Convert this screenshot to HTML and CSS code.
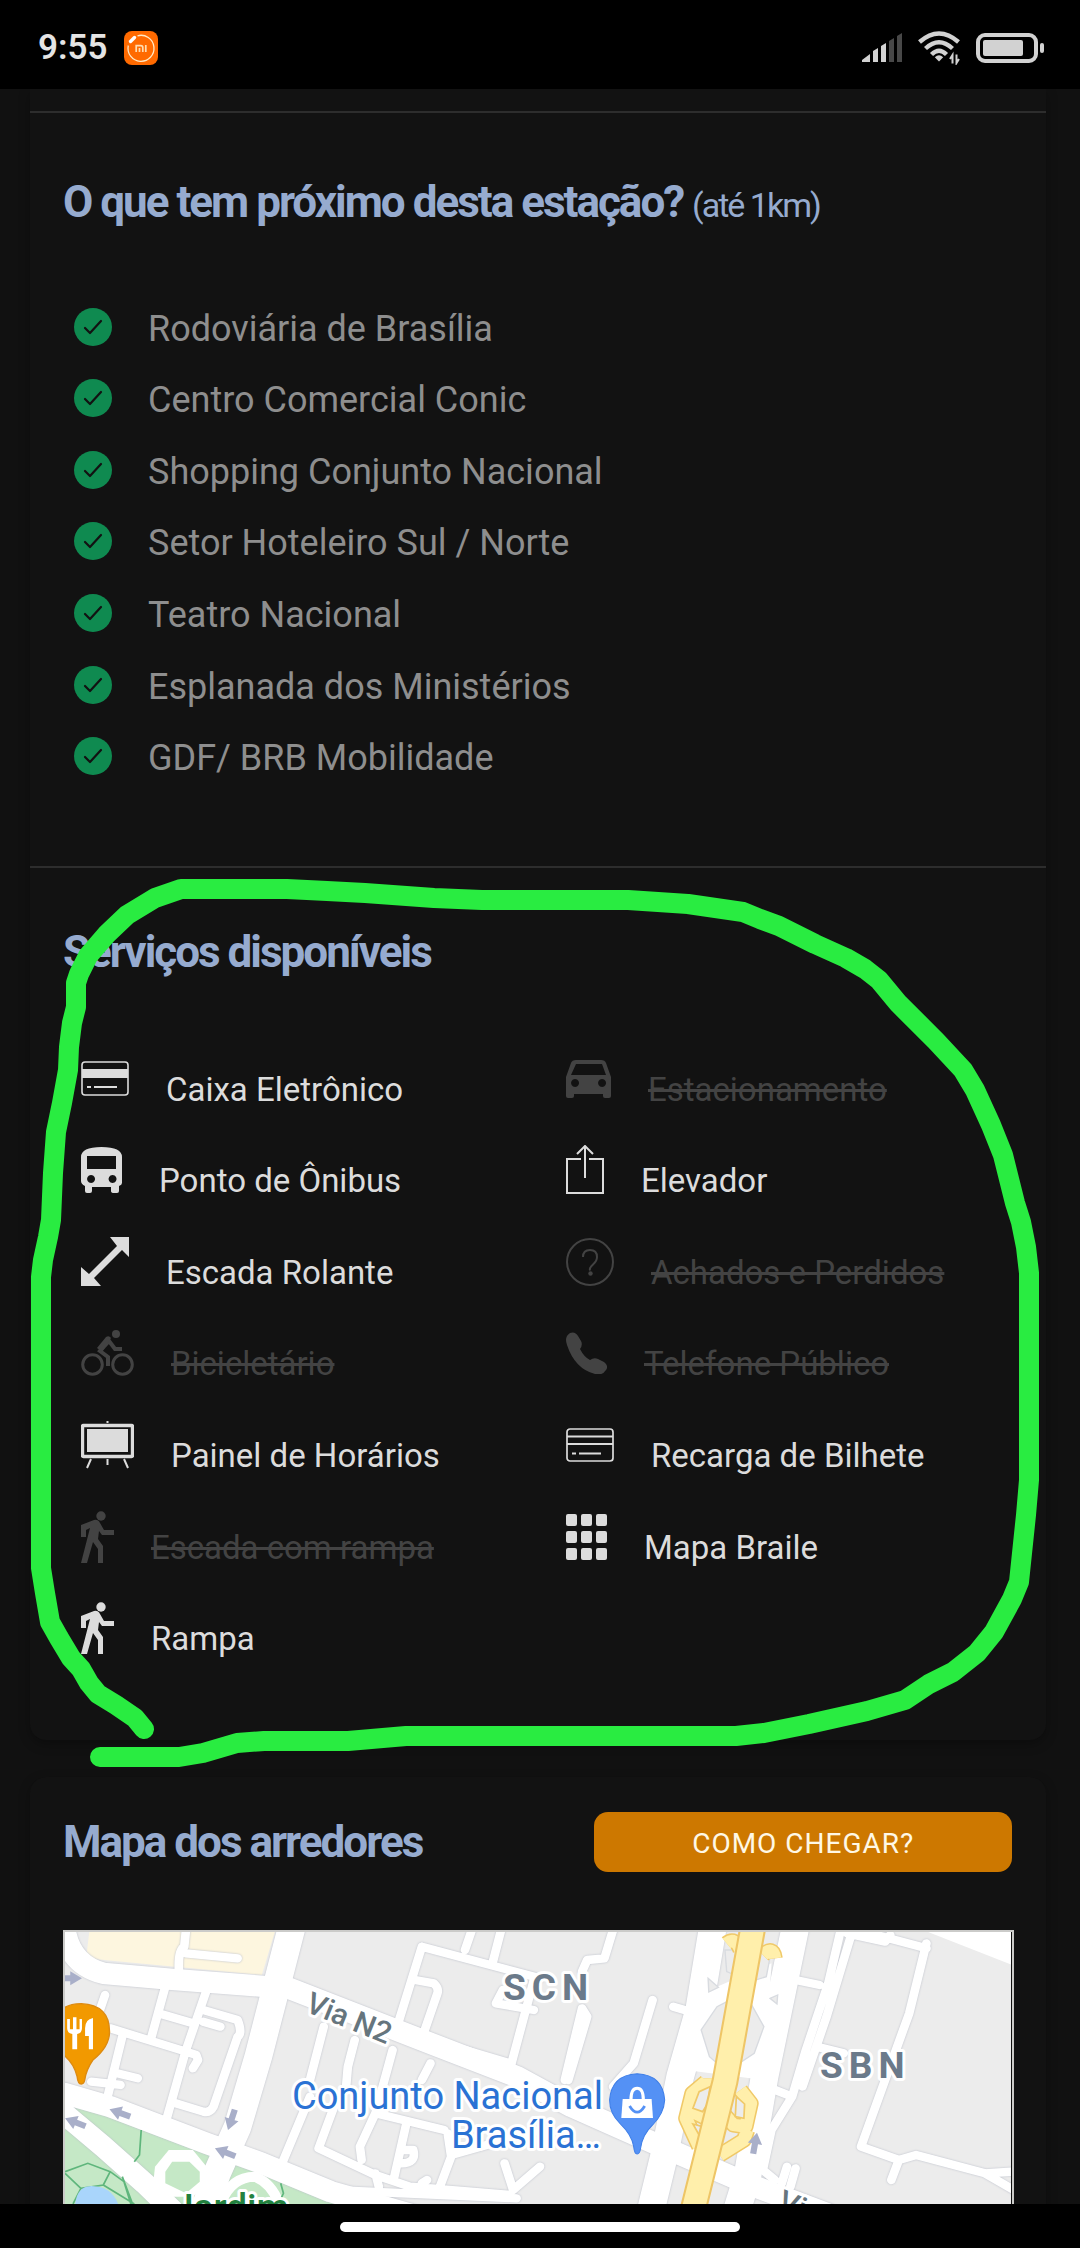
FILE: index.html
```html
<!DOCTYPE html>
<html lang="pt-BR">
<head>
<meta charset="utf-8">
<meta name="viewport" content="width=device-width, initial-scale=1">
<title>Estação Central</title>
<link rel="stylesheet" href="styles.css">
</head>
<body>
<header class="status">
  <span class="clock">9:55</span>
  <svg class="mi" viewBox="0 0 34 34" aria-hidden="true">
    <rect width="34" height="34" rx="8" fill="#ff6a00"/>
    <path d="M13.500 4.800A13 13 0 1 1 4.300 14.500" fill="none" stroke="#ffe9c4" stroke-width="1.300"/>
    <path d="M6.500 10.500l4-4" stroke="#fff" stroke-width="3.400" stroke-linecap="round"/>
    <path d="M12.200 21v-6.300h4.600q2 0 2 2V21M15.500 17v4M21.800 14v7" fill="none" stroke="#ffdcb0" stroke-width="1.700"/>
  </svg>
  <span class="status-gap"></span>
  <svg class="signal" viewBox="0 0 40 30" aria-hidden="true">
    <g fill="#d2d2d2"><path d="M0 29v-2l8-6v8zM11 29V18l5-3v14zM19 29V13l5-3v19z"/></g>
    <g fill="#484848"><path d="M27 29V8l5-3v24zM35 29V3l5-3v29z"/></g>
  </svg>
  <svg class="wifi" viewBox="0 0 44 34" aria-hidden="true">
    <g fill="none" stroke="#d2d2d2" stroke-width="4.400"><path d="M1.500 11Q21 -6 40.500 11M7.500 17.500Q21 5 34.500 17.500M13.500 23.500Q21 16 28.500 23.500"/></g>
    <path d="M21 30.500l-4.200-4.300q4.200-4 8.400 0z" fill="#d2d2d2"/>
    <path d="M34.500 32.500V24l-2.500 4M38.500 23.500V32l2.500-4" fill="none" stroke="#d2d2d2" stroke-width="2"/>
  </svg>
  <svg class="battery" viewBox="0 0 68 30" aria-hidden="true">
    <rect x="2" y="2" width="58" height="26" rx="7" fill="none" stroke="#d2d2d2" stroke-width="4"/>
    <rect x="7" y="7" width="40" height="16" rx="2" fill="#d2d2d2"/>
    <rect x="64" y="10" width="4" height="10" rx="2" fill="#d2d2d2"/>
  </svg>
</header>

<main class="page">
  <article class="card card-info">
    <section class="nearby">
      <h2 class="title">O que tem próximo desta estação? <small>(até 1km)</small></h2>
      <ul class="places">
        <li><svg class="check" viewBox="0 0 38 38"><use href="#ok"/></svg><span>Rodoviária de Brasília</span></li>
        <li><svg class="check" viewBox="0 0 38 38"><use href="#ok"/></svg><span>Centro Comercial Conic</span></li>
        <li><svg class="check" viewBox="0 0 38 38"><use href="#ok"/></svg><span>Shopping Conjunto Nacional</span></li>
        <li><svg class="check" viewBox="0 0 38 38"><use href="#ok"/></svg><span>Setor Hoteleiro Sul / Norte</span></li>
        <li><svg class="check" viewBox="0 0 38 38"><use href="#ok"/></svg><span>Teatro Nacional</span></li>
        <li><svg class="check" viewBox="0 0 38 38"><use href="#ok"/></svg><span>Esplanada dos Ministérios</span></li>
        <li><svg class="check" viewBox="0 0 38 38"><use href="#ok"/></svg><span>GDF/ BRB Mobilidade</span></li>
      </ul>
    </section>

    <section class="services">
      <h2 class="title">Serviços disponíveis</h2>
      <ul class="service-grid">
        <li><svg width="48" height="36" viewBox="0 0 48 36"><rect x="1" y="1" width="46" height="33" rx="3" fill="none" stroke="currentColor" stroke-width="1.600"/><path d="M1 8h46v9H1z" fill="currentColor"/><path d="M6 26h4M13 26h23" stroke="currentColor" stroke-width="2"/></svg><span>Caixa Eletrônico</span></li>
        <li class="off"><svg width="45" height="38" viewBox="0 0 45 38"><path fill="currentColor" fill-rule="evenodd" d="M10 0h25q4 0 5 3l5 14v19q0 2-2 2h-4q-2 0-2-2v-2H8v2q0 2-2 2H2q-2 0-2-2V17L5 3Q6 0 10 0zM10 4L5 15h35L36 4zM9 19a4 4 0 1 0 .1 0zM36 19a4 4 0 1 0 .1 0z"/></svg><span>Estacionamento</span></li>
        <li><svg width="41" height="46" viewBox="0 0 41 46"><path fill="currentColor" fill-rule="evenodd" d="M20.500 0Q41 0 41 10v26q0 2-3 3v5q0 2-2 2h-3q-3 0-3-2v-4H11v4q0 2-2 2H6q-2 0-2-2v-5q-4-2-4-5V10Q0 0 20.500 0zM6 9v13h29V9zM10 28a4 4 0 1 0 .1 0zM31.500 28a4 4 0 1 0 .1 0z"/></svg><span>Ponto de Ônibus</span></li>
        <li><svg width="38" height="50" viewBox="0 0 38 50"><path d="M15 14H1v34h36V14H23M19 33V2M11 9l8-8 8 8" fill="none" stroke="currentColor" stroke-width="2"/></svg><span>Elevador</span></li>
        <li><svg width="48" height="50" viewBox="0 0 48 50"><path fill="currentColor" d="M48 0v20l-7-7-28 28 7 8H0V30l8 7 28-28-7-9z"/></svg><span>Escada Rolante</span></li>
        <li class="off"><svg width="48" height="48" viewBox="0 0 48 48"><circle cx="24" cy="24" r="23" fill="none" stroke="currentColor" stroke-width="2"/><path d="M17 19q0-7 7-7t7 7q0 4-4 7.500t-3 6" fill="none" stroke="currentColor" stroke-width="2"/><circle cx="24.500" cy="35.500" r="2.200" fill="currentColor"/></svg><span>Achados e Perdidos</span></li>
        <li class="off"><svg width="53" height="46" viewBox="0 0 53 46"><g fill="none" stroke="currentColor" stroke-width="3"><circle cx="11.500" cy="34.500" r="9.800"/><circle cx="41.500" cy="34.500" r="9.800"/></g><circle cx="35" cy="4" r="4" fill="currentColor"/><path d="M27 36V27l-8-6 9-10 6 8h7" fill="none" stroke="currentColor" stroke-width="4"/><path d="M16 18L25 7q3-2 5 1l-9 14z" fill="currentColor"/></svg><span>Bicicletário</span></li>
        <li class="off"><svg width="41" height="42" viewBox="0 0 41 42"><path fill="currentColor" d="M4 1q5-2 8 3l3 5q2 4-1 8 4 8 10 11 4-3 8-1l6 3q5 4 2 8-4 6-11 4Q9 37 1 13-2 5 4 1z"/></svg><span>Telefone Público</span></li>
        <li><svg width="53" height="50" viewBox="0 0 53 50"><g fill="none" stroke="currentColor"><rect x="1.500" y="5.500" width="50" height="31" rx="1" stroke-width="3.400"/><path d="M10 39l-4 9M43 39l4 9M26.500 39v6M26.500 1v2" stroke-width="2"/></g><path d="M6 9h41v23H6z" fill="currentColor"/></svg><span>Painel de Horários</span></li>
        <li><svg width="48" height="34" viewBox="0 0 48 34"><g fill="none" stroke="currentColor"><rect x="1" y="1" width="46" height="32" rx="3" stroke-width="1.700"/><path d="M1 8.500h46M1 16h46M6 25.500h4M13 25.500h22" stroke-width="2"/></g></svg><span>Recarga de Bilhete</span></li>
        <li class="off"><svg width="33" height="52" viewBox="0 0 33 52"><use href="#walker"/></svg><span>Escada com rampa</span></li>
        <li><svg width="41" height="46" viewBox="0 0 41 46"><g fill="currentColor"><rect width="11" height="12" rx="2"/><rect x="15" width="11" height="12" rx="2"/><rect x="30" width="11" height="12" rx="2"/><rect y="17" width="11" height="12" rx="2"/><rect x="15" y="17" width="11" height="12" rx="2"/><rect x="30" y="17" width="11" height="12" rx="2"/><rect y="34" width="11" height="12" rx="2"/><rect x="15" y="34" width="11" height="12" rx="2"/><rect x="30" y="34" width="11" height="12" rx="2"/></g></svg><span>Mapa Braile</span></li>
        <li><svg width="33" height="52" viewBox="0 0 33 52"><use href="#walker"/></svg><span>Rampa</span></li>
      </ul>
    </section>
  </article>

  <article class="card card-map">
    <header class="map-head">
      <h2 class="title">Mapa dos arredores</h2>
      <button class="route" type="button">COMO CHEGAR?</button>
    </header>
    <div class="map">
      <svg viewBox="65 1932 946 400" role="img" aria-label="Mapa dos arredores">
        <defs>
          <g id="streets" fill="none" stroke-linejoin="round" stroke-linecap="round">
            <g class="w24">
              <path d="M540 90L535 140Q515 150 520 220M540 160L690 175M480 260L440 410M460 340L560 370M600 270L540 450 480 670M590 330L690 360Q705 400 690 410L620 620Q610 640 590 635L510 610M590 365L640 380M305 285L290 330M320 385L540 455 570 465 575 480 560 505M355 410L310 600M340 520L400 535M265 545L350 555"/>
              <path d="M940 380L900 540M1030 420L1010 500 1005 560M1140 450L1090 640M1250 490L1225 540M1090 640L1290 690M970 620L925 745 1090 825 1190 860 1480 885M900 590L815 800M1090 640L1045 740 1050 780M1180 670L1145 830M1165 750L1200 750Q1210 790 1165 790M1300 700L1310 770 1270 880M1225 850L1240 840M1310 765L1568 690M1465 790L1490 870 1568 800M1090 820L1100 860"/>
              <path d="M1225 140L1150 390M1225 140L1568 235M1370 90L1350 150M1455 90L1430 190M1205 240L1260 250Q1275 265 1270 280L1230 400M1460 270L1440 310 1550 330M1550 240L1480 510 1568 560M1480 490L1350 450M1780 90L1755 175 1705 180 1690 215M1690 325L1640 540M1690 325L1705 350 1650 540M1895 300L1840 490 1780 560M1955 320L2005 335"/>
              <path d="M2440 95L2405 250 2340 450 2300 590 2240 690 2215 810 2250 840M2470 110L2400 350 2330 560M2460 100L2570 125 2585 105M2490 90L2690 145M2690 130L2640 340 2500 740 2610 780 2660 765 2860 820 2940 815M2610 780L2588 840M2860 820L2960 880M2310 240L2380 255M2370 440L2450 460M2250 570L2300 590M2285 800L2270 850M2310 805L2295 860"/>
            </g>
            <path class="w60" d="M185 60Q190 190 300 220L500 238 840 265 1250 430 1500 530 1660 620 1900 730 2180 855 2450 960"/>
            <path class="w60" d="M185 580L320 620 600 730 760 790 960 875 1250 960M185 640L300 740 420 850 500 930"/>
            <path class="w24" d="M960 870L1500 895"/>
            <path class="w80" d="M850 70L800 270 750 470 690 680 630 820 590 940"/>
            <path class="w80" d="M2070 80L2030 330 1975 530 1930 760 1890 930M2310 80L2260 330 2220 530 2170 830 2140 930"/>
          </g>
          <path id="arrow" d="M0 0l34-21v12h30V9H34v12z" fill="#a9afc9"/>
        </defs>
        <rect x="65" y="1932" width="946" height="400" fill="#ececec"/>
        <g transform="translate(0 1900) scale(.3444 .3333)">
          <path d="M260 90H800L760 225 250 175z" fill="#fdf6df"/>
          <path d="M180 600L610 760 1060 930H180z" fill="#c5e8c6"/>
          <path d="M2680 90H2940V195z" fill="#fff"/>
          <use href="#streets" class="casing"/>
          <use href="#streets" class="road"/>
          <path d="M2060 270L2240 190 2220 540 1990 510z" fill="#fff"/>
          <path d="M450 800L490 750 560 750 600 800 600 850 560 890 490 890 445 850z" fill="#fff"/>
          <path d="M480 815L500 785H550L580 815V845L540 880 480 850z" fill="#c5e8c6"/>
          <path d="M640 912Q670 830 740 830 790 850 810 912" fill="none" stroke="#fff" stroke-width="30"/>
          <g fill="#ececec" stroke="#d8dbe0" stroke-width="4"><path d="M2036 390L2082 320 2120 300 2180 310 2218 380 2190 460 2110 515 2060 470zM2105 150H2240L2225 230 2180 245 2110 215zM2056 235L2086 262 2058 276zM2236 295L2258 285 2256 312z"/></g>
          <g fill="none" stroke-linejoin="round"><path d="M2110 130Q2135 110 2150 150M2215 165Q2245 135 2250 175M2050 545L2010 580 1992 655 2030 740M2150 570L2180 610 2165 680 2130 675 2100 640M2055 535L2060 610 2020 640 2060 660M2170 690L2160 720 2090 765" stroke="#f0c968" stroke-width="46"/><path d="M2110 130Q2135 110 2150 150M2215 165Q2245 135 2250 175M2050 545L2010 580 1992 655 2030 740M2150 570L2180 610 2165 680 2130 675 2100 640M2055 535L2060 610 2020 640 2060 660M2170 690L2160 720 2090 765" stroke="#ffefab" stroke-width="37"/></g>
          <g fill="#ececec" stroke="#f0c968" stroke-width="5"><path d="M2012 625L2030 575 2062 560 2055 610 2040 635zM2138 590L2162 612 2160 655 2135 650zM2012 672L2040 680 2030 705z"/></g>
          <path d="M2188 70L2105 545 2010 940" fill="none" stroke="#eec566" stroke-width="78"/>
          <path d="M2188 70L2105 545 2010 940" fill="none" stroke="#ffefab" stroke-width="66"/>
          <path d="M410 690L405 765 390 785M189 815L255 790 320 815 360 845 380 912M189 820L235 865 212 912M320 815L300 855 235 865M300 855L390 912M355 830L385 912M815 850L823 880 812 905" fill="none" stroke="#5fb67c" stroke-width="5"/>
          <path d="M218 920Q220 860 265 858 330 860 345 920z" fill="#a9d5fb"/>
          <use href="#arrow" transform="translate(238 235) rotate(180)"/>
          <use href="#arrow" transform="translate(318 628) rotate(20)"/>
          <use href="#arrow" transform="translate(189 655) rotate(22)"/>
          <use href="#arrow" transform="translate(624 745) rotate(22)"/>
          <use href="#arrow" transform="translate(662 690) rotate(-72)"/>
          <use href="#arrow" transform="translate(2198 698) rotate(100)"/>
          <path d="M236 552Q226 552 224 530 215 490 185 465V325Q200 312 236 311 318 315 318 395 318 440 270 480 250 510 246 540 244 552 236 552z" fill="#f29900" stroke="#dd8a10" stroke-width="4"/>
          <path d="M195 357V385Q195 400 210 402V448H224V402Q238 400 238 385V357H231V388H222V352H212V388H203V357zM270 354V448H258V408H247V385Q247 358 270 354z" fill="#fff"/>
          <path d="M1850 762Q1842 762 1840 740 1835 705 1800 670 1770 640 1770 600 1775 525 1850 521 1925 525 1930 600 1928 640 1895 675 1865 705 1860 745 1858 762 1850 762z" fill="#5491f5" stroke="#3f7fe8" stroke-width="3"/>
          <path d="M1808 597H1892L1896 654H1804z" fill="#fff"/><path d="M1832 600Q1832 565 1850 565T1868 600" fill="none" stroke="#fff" stroke-width="9"/><path d="M1828 618Q1850 655 1872 618" fill="none" stroke="#5491f5" stroke-width="8"/>
        </g>
        <g class="labels">
          <text class="area" x="503" y="2000">SCN</text>
          <text class="area" x="820" y="2078">SBN</text>
          <text class="via" transform="translate(304 2011) rotate(22)">Via N2</text>
          <text class="via" transform="translate(776 2209) rotate(22)">Via N2</text>
          <text class="poi" x="603" y="2109" text-anchor="end">Conjunto Nacional</text>
          <text class="poi" x="601" y="2148" text-anchor="end">Brasília…</text>
          <text class="park" x="173" y="2220">Jardim</text>
        </g>
      </svg>
    </div>
  </article>

  <svg class="marker" viewBox="0 89 1080 2115" aria-hidden="true">
    <polyline points="144,1729 135,1718 116,1705 98,1694 89,1683 81,1669 71,1658 59,1638 50,1622 45,1593 41,1568 41,1277 43,1260 48,1237 51,1220 53,1173 56,1132 62,1103 68,1070 69,1047 72,1023 76,1007 76,983 79,974 88,956 107,934 127,915 155,898 181,889 287,889 327,891 365,893 434,898 482,900 628,900 688,904 743,912 760,919 779,926 815,944 846,958 865,969 879,980 898,1003 936,1041 963,1070 975,1090 991,1125 1003,1155 1015,1203 1021,1222 1026,1247 1029,1273 1029,1480 1026,1515 1019,1582 1012,1599 994,1632 977,1653 953,1672 929,1684 905,1700 867,1711 809,1724 764,1733 736,1736 406,1736 348,1741 264,1741 237,1743 220,1748 203,1753 179,1757 100,1757"/>
  </svg>
</main>

<footer class="gesture"><span class="pill"></span></footer>

<svg class="symbols" aria-hidden="true">
  <symbol id="ok" viewBox="0 0 38 38"><circle cx="19" cy="19" r="19" fill="#0f8a50"/><path d="M11 20l5 5L27 13" fill="none" stroke="#121212" stroke-width="2.200" stroke-linecap="round" stroke-linejoin="round"/></symbol>
  <symbol id="walker" viewBox="0 0 33 52"><circle cx="20" cy="5" r="4.700" fill="currentColor"/><path fill="currentColor" d="M13 9Q17 8 19 12l4 7h10v5H21l-3-4-1 8 5 7v17h-5V38l-5-7-6 21H0L9 17l-4 2v7H0V14z"/></symbol>
</svg>
</body>
</html>
```
FILE: styles.css
```css
* { box-sizing: border-box; }

body {
  margin: 0;
  height: 100vh;
  display: flex;
  flex-direction: column;
  background: #111;
  color: #dcdcdc;
  font-family: Roboto, "Liberation Sans", sans-serif;
}

ul { list-style: none; margin: 0; padding: 0; }
svg { display: block; flex: none; }

/* System bars */
.status {
  flex: none;
  height: 89px;
  padding: 6px 36px 0 38px;
  display: flex;
  align-items: center;
  background: #000;
}
.clock { font-size: 35px; font-weight: 600; color: #e4e4e4; line-height: 40px; }
.mi { width: 34px; height: 34px; margin-left: 16px; }
.status-gap { flex: 1; }
.signal { width: 40px; height: 30px; }
.wifi { width: 44px; height: 34px; margin-left: 16px; }
.battery { width: 68px; height: 30px; margin-left: 14px; }

.gesture {
  flex: none;
  height: 44px;
  display: flex;
  align-items: center;
  justify-content: center;
  padding-top: 2px;
  background: #000;
}
.pill { width: 37%; height: 10px; border-radius: 5px; background: #fff; }

/* Page */
.page {
  position: relative;
  flex: 1;
  min-height: 0;
  overflow: hidden;
  padding: 0 34px 0 30px;
}
.card {
  background: #121212;
  border-radius: 16px;
  box-shadow: 0 4px 12px rgba(0, 0, 0, .3);
}
.card-info { padding-top: 22px; border-top-left-radius: 0; border-top-right-radius: 0; }
.card-map { margin-top: 37px; padding: 35px 32px 40px 33px; }

.title {
  margin: 0;
  font-size: 44px;
  line-height: 52px;
  font-weight: 700;
  letter-spacing: -2px;
  color: #96abcf;
}
.title small { font-size: 34px; font-weight: 400; }

.nearby, .services { border-top: 2px solid #2d2d2d; }
.nearby { padding: 63px 33px 74px; }
.services { padding: 58px 33px 66px; }

.places {
  margin: 60px 0 0 11px;
  min-height: 501px;
  display: grid;
  grid-auto-rows: 1fr;
}
.places li { display: flex; align-items: center; gap: 36px; color: #8e8e8e; font-size: 36px; line-height: 40px; }
.places span { padding-top: 4px; }
.check { width: 38px; height: 38px; }

.service-grid {
  margin: 55px 0 0 18px;
  min-height: 641px;
  display: grid;
  grid-template-columns: 1fr 1fr;
  grid-auto-rows: 1fr;
  column-gap: 38px;
}
.service-grid li { display: flex; align-items: center; gap: 37px; font-size: 33px; line-height: 40px; }
.service-grid span { padding-top: 22px; }
.service-grid .off { color: #434343; }
.off span { text-decoration: line-through; }

/* Map */
.map-head { display: flex; align-items: center; justify-content: space-between; padding-right: 2px; }
.route {
  width: 44%;
  height: 60px;
  padding: 4px 0 0;
  border: 0;
  border-radius: 14px;
  background: #cd7800;
  color: #fff8e6;
  font: 400 28px/32px Roboto, "Liberation Sans", sans-serif;
  letter-spacing: 1px;
}
.map { margin-top: 58px; border: 2px solid #cbcbc9; padding-right: 1px; overflow: hidden; }
.map svg { width: 100%; }

.w24 { stroke-width: 25px; }
.w60 { stroke-width: 64px; }
.w80 { stroke-width: 80px; }
.casing { stroke: #dadce1; filter: drop-shadow(0 0 3px #b9bdc8); }
.road { stroke: #fff; }

.labels text { paint-order: stroke; stroke: #fff; stroke-width: 6px; stroke-linejoin: round; }
.labels .area { font-size: 37px; font-weight: 700; letter-spacing: 6px; fill: #6b7a8a; }
.labels .via { font-size: 30px; font-weight: 500; fill: #66757d; }
.labels .poi { font-size: 38px; font-weight: 400; fill: #2a72d4; }
.labels .park { font-size: 37px; font-weight: 500; fill: #23813f; }

.marker {
  position: absolute;
  top: 0;
  left: 0;
  width: 100%;
  pointer-events: none;
}
.marker polyline {
  fill: none;
  stroke: #29ec41;
  stroke-width: 20px;
  stroke-linecap: round;
  stroke-linejoin: round;
}
.symbols { position: absolute; width: 0; height: 0; }
```
